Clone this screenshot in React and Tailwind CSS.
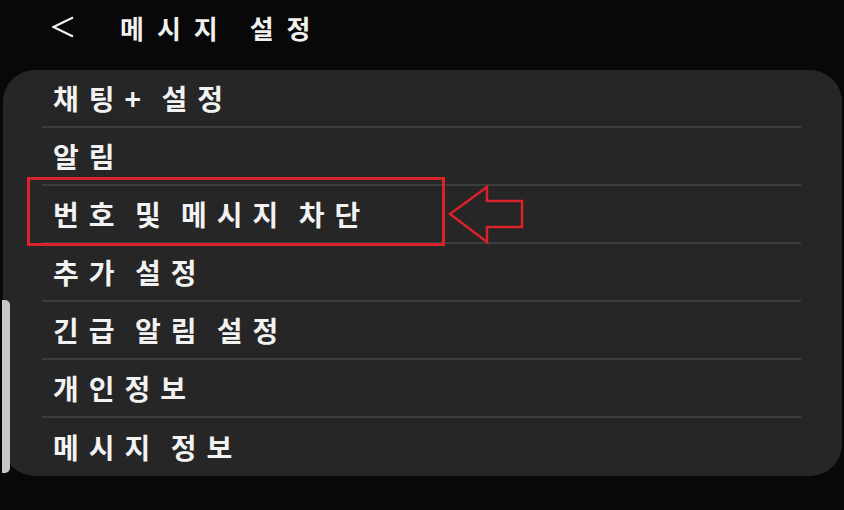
const items = [
  '채팅+ 설정',
  '알림',
  '번호 및 메시지 차단',
  '추가 설정',
  '긴급 알림 설정',
  '개인정보',
  '메시지 정보',
];

function App() {
  return (
    <div
      className="relative w-[844px] h-[510px] overflow-hidden bg-[#080808] text-white"
      style={{ fontFamily: '"Noto Sans CJK KR", "Noto Sans", sans-serif' }}
    >
      {/* header */}
      <div className="flex items-center h-[70px] pb-[16px]">
        <svg className="ml-[52px] w-[22px] h-[22px]" viewBox="0 0 22 22" fill="none">
          <polyline points="21,1.5 1.5,11 21,20.5" stroke="#f2f2f2" strokeWidth="2" strokeLinejoin="miter" />
        </svg>
        <h1 className="ml-[46px] text-[26px] font-bold tracking-[13px] text-[#f0f0f0]">메시지 설정</h1>
      </div>

      {/* settings card */}
      <div className="ml-[3px] w-[839px] h-[406px] rounded-[32px] bg-[#262626]">
        {items.map((label, i) => (
          <div key={label} className="h-[58px] flex flex-col">
            <div className="flex-1 flex items-center pl-[50px]">
              <span className="text-[28px] font-bold tracking-[10px] [word-spacing:-6px] text-[#f2f2f2]">{label}</span>
            </div>
            {i < items.length - 1 && (
              <div className="ml-[39px] mr-[41px] h-[2px] bg-[#3d3d3d]" />
            )}
          </div>
        ))}
      </div>

      {/* scrollbar */}
      <div className="absolute left-[2px] top-[300px] w-[8px] h-[173px] rounded-r-[5px] bg-[#c6c6c6]" />

      {/* annotation box */}
      <div className="absolute left-[27px] top-[177px] w-[418px] h-[69px] border-[3px] border-[#d8232a]" />

      {/* annotation arrow */}
      <svg className="absolute left-[448px] top-[184px]" width="78" height="62" viewBox="0 0 78 62" fill="none">
        <polygon
          points="2,30 39,3 39,17 74,17 74,43 39,43 39,58"
          stroke="#d8232a"
          strokeWidth="2.5"
          strokeLinejoin="miter"
        />
      </svg>
    </div>
  );
}

export default App;
